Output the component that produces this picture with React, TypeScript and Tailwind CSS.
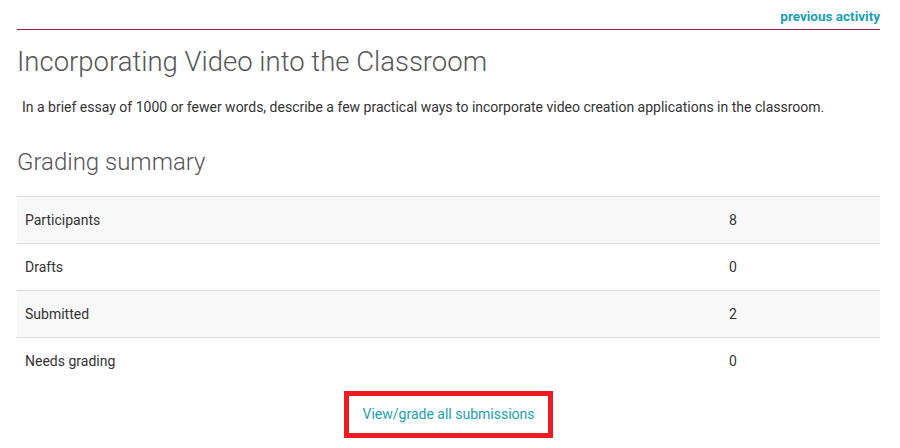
const rows = [
  { label: "Participants", value: "8" },
  { label: "Drafts", value: "0" },
  { label: "Submitted", value: "2" },
  { label: "Needs grading", value: "0" },
];

export default function App() {
  return (
    <div className="min-h-screen bg-white font-['Roboto',sans-serif] text-[#373a3c]">
      <div className="w-[863px] ml-[17px]">
        {/* activity nav */}
        <div className="flex justify-end border-b border-[#9b1b45] pt-[8px] pb-[5px]">
          <a href="#" className="text-[13.5px] leading-[16px] font-bold text-[#1b9fb4]">
            previous activity
          </a>
        </div>

        <h2 className="mt-[14px] text-[27.5px] leading-[36px] font-light text-[#555]">
          Incorporating Video into the Classroom
        </h2>
        <p className="mt-[17px] ml-[5px] text-[14px] leading-[20px] text-[#333]">
          In a brief essay of 1000 or fewer words, describe a few practical ways to incorporate video creation
          applications in the classroom.
        </p>

        <h3 className="mt-[30px] text-[24px] leading-[30px] font-light text-[#555]">Grading summary</h3>

        <div className="mt-[19px] border-t border-[#dcdcdc] text-[14px] text-[#333]">
          {rows.map((r, i) => (
            <div
              key={r.label}
              className={`grid grid-cols-[704px_1fr] h-[47px] items-center border-b border-[#dcdcdc] last:border-b-0 ${
                i % 2 === 0 ? "bg-[#f8f8f8]" : "bg-white"
              }`}
            >
              <div className="px-2">{r.label}</div>
              <div className="px-2">{r.value}</div>
            </div>
          ))}
        </div>

        <div className="flex justify-center mt-[6px]">
          <div className="w-[209px] h-[47px] border-[5px] border-[#ed1c24] flex items-center justify-center">
            <a href="#" className="text-[14px] text-[#1b9fb4]">
              View/grade all submissions
            </a>
          </div>
        </div>
      </div>
    </div>
  );
}
